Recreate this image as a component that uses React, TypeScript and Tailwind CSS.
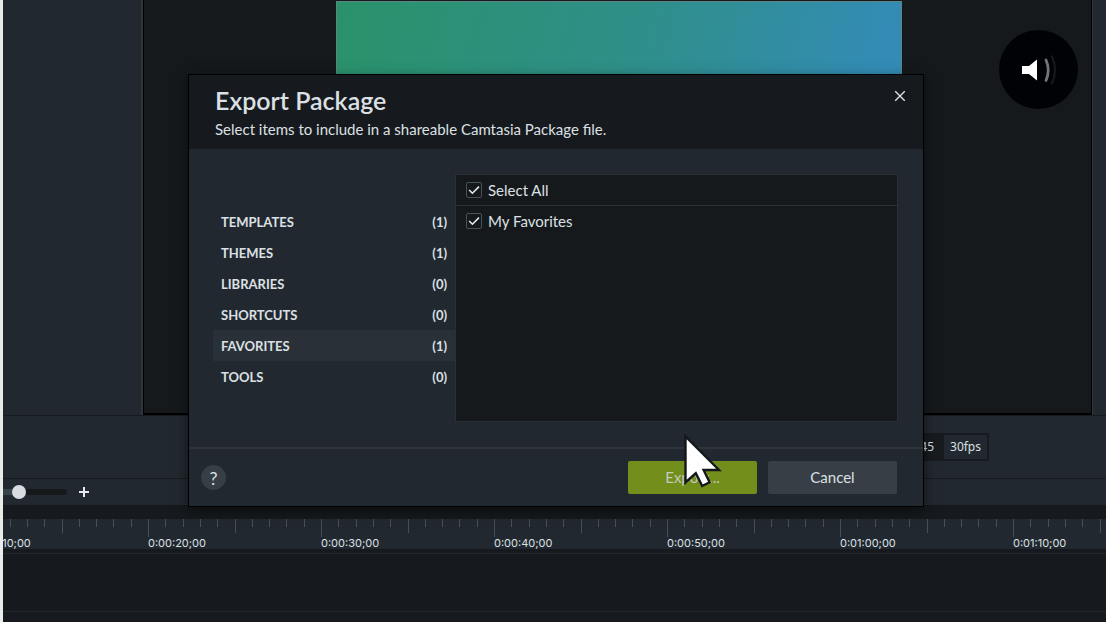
import React, { useState } from 'react';

interface Category {
  name: string;
  count: number;
}

const categories: Category[] = [
  { name: 'TEMPLATES', count: 1 },
  { name: 'THEMES', count: 1 },
  { name: 'LIBRARIES', count: 0 },
  { name: 'SHORTCUTS', count: 0 },
  { name: 'FAVORITES', count: 1 },
  { name: 'TOOLS', count: 0 },
];

const timeMarks = [
  '0:00:10;00',
  '0:00:20;00',
  '0:00:30;00',
  '0:00:40;00',
  '0:00:50;00',
  '0:01:00;00',
  '0:01:10;00',
];

const tickHeight = (i: number) => (i === 0 ? 18 : i === 5 ? 14 : 8);

const CheckRow: React.FC<{ label: string; checked: boolean; onChange: () => void }> = ({ label, checked, onChange }) => (
  <label className="flex h-[30px] items-center gap-1.5 px-2.5 text-[15px]">
    <span className="grid size-4">
      <input
        type="checkbox"
        checked={checked}
        onChange={onChange}
        className="col-start-1 row-start-1 size-4 appearance-none rounded-xs border border-[#46525a] bg-[#15191c]"
      />
      {checked && (
        <svg viewBox="0 0 16 16" className="pointer-events-none col-start-1 row-start-1 size-4" fill="none" stroke="#e4e8ea" strokeWidth="1.6">
          <path d="M3.2 8 L6.4 11.2 L13 4.6" />
        </svg>
      )}
    </span>
    {label}
  </label>
);

const TimeSegment: React.FC<{ label: string }> = ({ label }) => (
  <div className="w-[173px] shrink-0">
    <svg viewBox="0 0 173 18" className="h-[18px] w-full" stroke="#454f55">
      {Array.from({ length: 10 }, (_, i) => (
        <line key={i} x1={Math.round(i * 17.3) + 0.5} x2={Math.round(i * 17.3) + 0.5} y1="0" y2={tickHeight(i)} />
      ))}
    </svg>
    <div className="font-['Inter',sans-serif] text-[11px] leading-3">{label}</div>
  </div>
);

const Cursor = () => (
  <svg viewBox="0 0 38 56" className="pointer-events-none absolute -top-7 left-14 h-14 w-[38px]">
    <path
      d="M1.5 3.5 V49.5 L11.8 40.3 L18.2 53 L25.6 49.3 L19.6 37 H35 Z"
      fill="#fff"
      stroke="#15181b"
      strokeWidth="2.4"
    />
  </svg>
);

export default function App() {
  const [active, setActive] = useState('FAVORITES');
  const [favorites, setFavorites] = useState(true);
  const [zoom, setZoom] = useState(18);

  return (
    <div className="relative flex min-h-screen flex-col overflow-hidden border-l-3 border-[#e9ece9] bg-[#16191d] font-['Lato',sans-serif] text-[#dce0e4]">
      {/* Canvas area */}
      <div className="flex h-[415px]">
        <div className="w-[140px] shrink-0 border-r-2 border-[#30353c] bg-[#22282f]" />
        <div className="flex flex-1 justify-center border-x border-b-2 border-black bg-[#15191c] pt-px pl-0.5">
          <div className="h-[318px] w-[566px] border border-[#5c8583] bg-linear-[105deg] from-[#2a926a] via-[#2f8f8b] to-[#348ac4]" />
        </div>
        <div className="w-[14px] shrink-0 border-l border-[#30353c] bg-[#22282f]" />
      </div>

      {/* Playback info */}
      <div className="flex h-16 items-center justify-end border-y border-[#171b1f] bg-[#22282f] pr-[117px] font-['Noto_Sans',sans-serif] text-xs">
        <div className="flex rounded-xs border-2 border-[#171b1f] bg-[#171b1f] pl-7">
          <span className="pr-2.5 leading-6">45</span>
          <span className="bg-[#22282f] px-1.5 leading-6">30fps</span>
        </div>
      </div>

      {/* Timeline zoom */}
      <div className="flex h-[26px] items-center gap-3 bg-[#22282f]">
        <input
          type="range"
          aria-label="Timeline zoom"
          min={0}
          max={100}
          value={zoom}
          onChange={(e) => setZoom(Number(e.target.value))}
          className="h-1.5 w-16 appearance-none rounded-r-full bg-[#15191c] bg-linear-to-r from-[#37444a] from-25% to-[#15191c] to-25% [&::-webkit-slider-thumb]:size-3.5 [&::-webkit-slider-thumb]:appearance-none [&::-webkit-slider-thumb]:rounded-full [&::-webkit-slider-thumb]:bg-[#d8dce2]"
        />
        <button type="button" aria-label="Zoom in">
          <svg viewBox="0 0 10 10" className="size-2.5" stroke="#e4e8ea" strokeWidth="2">
            <path d="M5 0 V10 M0 5 H10" />
          </svg>
        </button>
      </div>

      {/* Ruler */}
      <div className="mt-3.5 flex h-[30px] overflow-hidden bg-[#22282f]">
        <div className="-ml-7 flex">
          {timeMarks.map((mark) => (
            <TimeSegment key={mark} label={mark} />
          ))}
        </div>
      </div>
      <div className="mt-1 h-[59px] border-y border-[#23282d]" />

      {/* Export dialog */}
      <div className="absolute inset-0 flex items-start justify-center pt-[74px] pl-[3px]">
        <div role="dialog" aria-labelledby="dialog-title" className="w-[736px] border border-black bg-[#22282f] shadow-[0_4px_12px_rgba(0,0,0,0.5)]">
          <div className="flex h-[74px] items-start justify-between bg-[#16191d] px-[26px] pt-2.5">
            <div>
              <h1 id="dialog-title" className="text-[25px] leading-[30px] font-semibold">Export Package</h1>
              <p className="mt-0.5 text-[15px] leading-6">Select items to include in a shareable Camtasia Package file.</p>
            </div>
            <button type="button" aria-label="Close" className="-mr-3.5 p-1.5">
              <svg viewBox="0 0 10 10" className="size-2.5" stroke="#dce0e4" strokeWidth="1.4">
                <path d="M0 0 L10 10 M10 0 L0 10" />
              </svg>
            </button>
          </div>

          <div className="flex h-[298px] py-[25px] pr-[25px] pl-6">
            <nav className="w-[242px] shrink-0 pt-8">
              {categories.map((cat) => (
                <button
                  key={cat.name}
                  type="button"
                  onClick={() => setActive(cat.name)}
                  className={`flex h-[31px] w-full items-center justify-between px-2 pt-0.5 text-[13px] font-bold ${
                    active === cat.name ? 'bg-[#2a3037]' : ''
                  }`}
                >
                  <span>{cat.name}</span>
                  <span>({cat.count})</span>
                </button>
              ))}
            </nav>
            <div className="flex-1 border border-[#2a3036] bg-[#15191c]">
              <div className="border-b border-[#2c3237]">
                <CheckRow label="Select All" checked={favorites} onChange={() => setFavorites(!favorites)} />
              </div>
              <CheckRow label="My Favorites" checked={favorites} onChange={() => setFavorites(!favorites)} />
            </div>
          </div>

          <div className="flex h-[59px] items-center justify-between border-t-2 border-[#30353d] pr-[26px] pl-3">
            <button type="button" aria-label="Help" className="size-[25px] rounded-full bg-[#373e45] text-lg leading-6">?</button>
            <div className="flex gap-[11px] text-[15px]">
              <div className="relative">
                <button type="button" className="h-[33px] w-[129px] rounded-xs bg-[#738f1b] text-[#c3c9bd]">Export...</button>
                <Cursor />
              </div>
              <button type="button" className="h-[33px] w-[129px] rounded-xs bg-[#373e45]">Cancel</button>
            </div>
          </div>
        </div>
      </div>

      {/* Sound indicator */}
      <div className="absolute top-[30px] right-7 flex size-[79px] items-center justify-center rounded-full bg-[#010206]">
        <svg viewBox="0 0 36 30" className="h-[30px] w-9" fill="none" strokeLinecap="round">
          <path d="M1 11 H8 L16 4.5 V25.5 L8 19 H1 Z" fill="#fff" />
          <path d="M25 5 Q29.5 15 25 25.5" stroke="#70757c" strokeWidth="2.8" />
          <path d="M31 1.5 Q37 15 31 28.5" stroke="#14171b" strokeWidth="2.4" />
        </svg>
      </div>
    </div>
  );
}
